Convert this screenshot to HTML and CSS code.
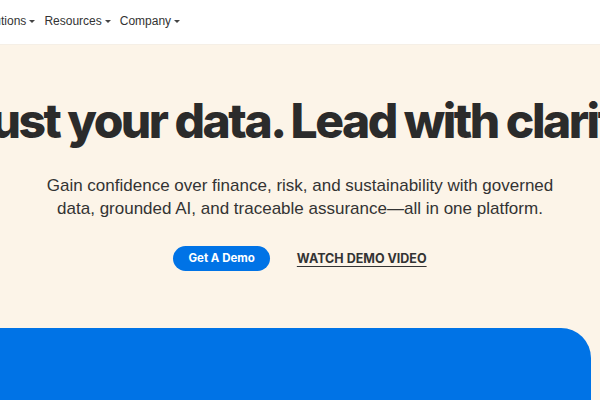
FILE: index.html
```html
<!DOCTYPE html>
<html>
<head>
    <link rel="stylesheet" href="styles.css">
</head>
<body>
    <header class="site-nav">
        <ul class="nav-links">
            <li>Solutions <span class="caret"></span></li>
            <li>Resources <span class="caret"></span></li>
            <li>Company <span class="caret"></span></li>
        </ul>
    </header>

    <section class="hero">
        <div class="hero-title">
            <h1>Trust your data. Lead with clarity.</h1>
        </div>
        <p class="hero-sub">Gain confidence over finance, risk, and sustainability with governed<br>data, grounded AI, and traceable assurance&mdash;all in one platform.</p>
        <div class="hero-actions">
            <a class="btn-demo" href="#">Get A Demo</a>
            <a class="link-video" href="#">WATCH DEMO VIDEO</a>
        </div>
        <div class="hero-card"></div>
    </section>
</body>
</html>
```

FILE: styles.css
```css
html, body {
    margin: 0;
    padding: 0;
}

body {
    overflow: hidden;
    font-family: "Liberation Sans", Arial, sans-serif;
    color: #2d2d2d;
    background-color: #fcf4e8;
}

.site-nav {
    height: 44px;
    background-color: #fff;
    border-bottom: 1px solid #f5efe6;
    display: flex;
    align-items: center;
}

.nav-links {
    list-style: none;
    margin: -2px 0 0 -23px;
    padding: 0;
    display: flex;
    gap: 9px;
    font-size: 12px;
    color: #333;
}

.nav-links li {
    display: flex;
    align-items: center;
    gap: 3px;
}

.caret {
    width: 0;
    height: 0;
    border-left: 3px solid transparent;
    border-right: 3px solid transparent;
    border-top: 3px solid #444;
}

.hero {
    display: flex;
    flex-direction: column;
    align-items: center;
}

.hero-title {
    width: 100%;
    display: flex;
    justify-content: center;
    margin-top: 46px;
}

.hero-title h1 {
    margin: 0;
    white-space: nowrap;
    font-family: Inter, "Liberation Sans", sans-serif;
    font-weight: 800;
    font-size: 48px;
    line-height: 60px;
    letter-spacing: -2.5px;
    color: #2b2b2b;
}

.hero-sub {
    margin: 23px 0 0;
    text-align: center;
    font-family: "Liberation Sans", Arial, sans-serif;
    font-size: 17px;
    line-height: 23px;
    color: #333;
}

.hero-actions {
    display: flex;
    align-items: center;
    gap: 27px;
    margin-top: 26px;
}

.btn-demo {
    display: block;
    padding: 0 15px;
    height: 25px;
    line-height: 25px;
    border-radius: 13px;
    background-color: #0073e6;
    color: #fff;
    font-family: Inter, "Liberation Sans", sans-serif;
    font-weight: 700;
    font-size: 11.5px;
    text-decoration: none;
}

.link-video {
    font-family: Inter, "Liberation Sans", sans-serif;
    font-weight: 700;
    font-size: 12.5px;
    color: #333;
    text-decoration: underline;
    text-underline-offset: 3px;
}

.hero-card {
    align-self: stretch;
    margin: 57px 9px 0 -40px;
    height: 120px;
    background-color: #0073e6;
    border-radius: 30px 30px 0 0;
}
```
